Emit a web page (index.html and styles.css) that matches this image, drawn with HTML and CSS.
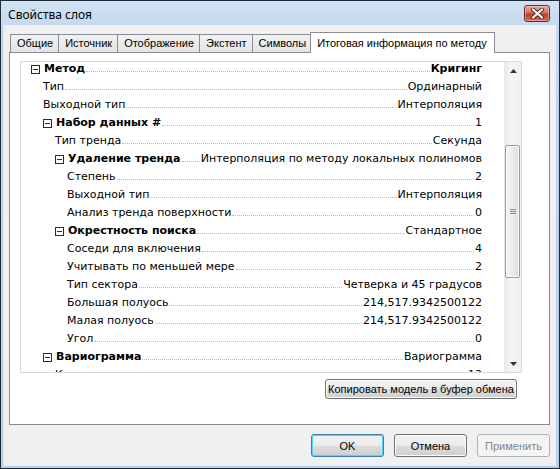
FILE: index.html
```html
<!DOCTYPE html>
<html lang="ru">
<head>
<meta charset="utf-8">
<title>Свойства слоя</title>
<link rel="stylesheet" href="styles.css">
</head>
<body>
<div class="window">
  <div class="titlebar">
    <span class="title">Свойства слоя</span>
    <span class="close">
      <svg width="13" height="11" viewBox="0 0 13 11"><path d="M2 1.5 L11 9.5 M11 1.5 L2 9.5" stroke="#5a2620" stroke-width="4" stroke-linecap="round"/><path d="M2 1.5 L11 9.5 M11 1.5 L2 9.5" stroke="#fff" stroke-width="2.2" stroke-linecap="round"/></svg>
    </span>
  </div>
  <div class="client">
    <div class="tabs">
      <div class="tab">Общие</div>
      <div class="tab">Источник</div>
      <div class="tab">Отображение</div>
      <div class="tab">Экстент</div>
      <div class="tab">Символы</div>
      <div class="tab active">Итоговая информация по методу</div>
    </div>
    <div class="panel">
      <div class="grid">
        <div class="rows">
          <div class="row l0 group strong"><span class="exp"></span><span class="label">Метод</span><span class="lead"></span><span class="val">Кригинг</span></div>
          <div class="row l1"><span class="label">Тип</span><span class="lead"></span><span class="val">Ординарный</span></div>
          <div class="row l1"><span class="label">Выходной тип</span><span class="lead"></span><span class="val">Интерполяция</span></div>
          <div class="row l1 group"><span class="exp"></span><span class="label">Набор данных #</span><span class="lead"></span><span class="val">1</span></div>
          <div class="row l2"><span class="label">Тип тренда</span><span class="lead"></span><span class="val">Секунда</span></div>
          <div class="row l2 group"><span class="exp"></span><span class="label">Удаление тренда</span><span class="lead"></span><span class="val">Интерполяция по методу локальных полиномов</span></div>
          <div class="row l3"><span class="label">Степень</span><span class="lead"></span><span class="val">2</span></div>
          <div class="row l3"><span class="label">Выходной тип</span><span class="lead"></span><span class="val">Интерполяция</span></div>
          <div class="row l3"><span class="label">Анализ тренда поверхности</span><span class="lead"></span><span class="val">0</span></div>
          <div class="row l2 group"><span class="exp"></span><span class="label">Окрестность поиска</span><span class="lead"></span><span class="val">Стандартное</span></div>
          <div class="row l3"><span class="label">Соседи для включения</span><span class="lead"></span><span class="val">4</span></div>
          <div class="row l3"><span class="label">Учитывать по меньшей мере</span><span class="lead"></span><span class="val">2</span></div>
          <div class="row l3"><span class="label">Тип сектора</span><span class="lead"></span><span class="val">Четверка и 45 градусов</span></div>
          <div class="row l3"><span class="label">Большая полуось</span><span class="lead"></span><span class="val">214,517.9342500122</span></div>
          <div class="row l3"><span class="label">Малая полуось</span><span class="lead"></span><span class="val">214,517.9342500122</span></div>
          <div class="row l3"><span class="label">Угол</span><span class="lead"></span><span class="val">0</span></div>
          <div class="row l1 group"><span class="exp"></span><span class="label">Вариограмма</span><span class="lead"></span><span class="val">Вариограмма</span></div>
          <div class="row l2"><span class="label">Количество лагов</span><span class="lead"></span><span class="val">12</span></div>
        </div>
        <div class="vscroll">
          <div class="sbtn"><svg width="7" height="4" viewBox="0 0 7 4"><path d="M0 4 L3.5 0 L7 4 Z" fill="#333"/></svg></div>
          <div class="track"><div class="thumb"><span class="grip"></span></div></div>
          <div class="sbtn"><svg width="7" height="4" viewBox="0 0 7 4"><path d="M0 0 L3.5 4 L7 0 Z" fill="#333"/></svg></div>
        </div>
      </div>
      <div class="copyrow"><button class="btn copy">Копировать модель в буфер обмена</button></div>
    </div>
    <div class="footer">
      <button class="btn default">OK</button>
      <button class="btn">Отмена</button>
      <button class="btn disabled">Применить</button>
    </div>
  </div>
</div>
</body>
</html>
```
FILE: styles.css
```css
* { box-sizing: border-box; }
html, body { margin: 0; padding: 0; }
body { width: 560px; height: 469px; overflow: hidden; background: #fff; font-family: "Liberation Sans", Arial, sans-serif; font-size: 11px; color: #000; }

.window {
  width: 560px; height: 469px;
  border: 1px solid #1d2a38;
  background: linear-gradient(#d3e2f3, #c2d6ed 30px, #b9cfe8);
  padding: 0 3px 2px 2px;
  display: flex; flex-direction: column;
}
.titlebar {
  height: 24px; flex: none;
  display: flex; align-items: center; justify-content: space-between;
  padding: 2px 6px 0 5px;
}
.title { font-family: "Noto Sans", "Open Sans", sans-serif; font-size: 12px; color: #000; }
.close {
  width: 26px; height: 17px; margin-top: -2px;
  border: 1px solid #6b2a23; border-radius: 3px;
  background: linear-gradient(#e9a99c, #d3705f 45%, #c0402e 55%, #d5664f);
  display: flex; align-items: center; justify-content: center;
  box-shadow: inset 0 0 0 1px rgba(255,255,255,0.35);
}
.client {
  flex: 1; background: #f0f0f0;
  border-left: 1px solid #dfe8f2;
  display: flex; flex-direction: column;
  padding-top: 7px;
}
.tabs { display: flex; align-items: flex-end; padding-left: 6px; height: 20px; }
.tab {
  height: 18px; padding: 0 5px 0 6px; line-height: 16px;
  border: 1px solid #898c95; border-bottom: none;
  background: linear-gradient(#f2f2f2, #e3e3e3);
  margin-left: -1px;
}
.tab:first-child { margin-left: 0; }
.tab.active { height: 21px; margin-bottom: -1px; margin-left: -2px; background: #fff; position: relative; z-index: 1; padding: 2px 7px 0 6px; }
.panel {
  margin-left: 5px; width: 541px; height: 373px;
  border: 1px solid #898c95; background: #fff;
  padding: 8px 0 0 10px;
}
.grid {
  width: 502px; height: 312px;
  border: 1px solid #d9d9d9;
  display: flex; overflow: hidden;
}
.rows { flex: 1; overflow: hidden; font-family: "DejaVu Sans", Verdana, sans-serif; font-size: 11px; }
.row {
  height: 18px; display: flex; align-items: baseline;
  line-height: 13px; padding-right: 22px; white-space: nowrap;
}
.l0 { padding-left: 10px; }
.l1 { padding-left: 22px; }
.l2 { padding-left: 34px; }
.l3 { padding-left: 46px; }
.group .label { font-weight: bold; }
.strong .val { font-weight: bold; }
.exp {
  width: 9px; height: 9px; margin: 3px 4px 0 0; flex: none;
  border: 1px solid #2b2b2b; position: relative; align-self: flex-start;
}
.exp::after { content: ""; position: absolute; left: 1px; right: 1px; top: 3px; height: 1px; background: #2b2b2b; }
.lead { flex: 1; height: 0; border-bottom: 1px dotted #b8b8b8; margin: 0 1px; }

.vscroll { width: 17px; flex: none; display: flex; flex-direction: column; background: linear-gradient(90deg, #e9e9e9, #f5f5f5 40%, #f0f0f0); border-left: 1px solid #eaeaea; }
.sbtn { height: 17px; flex: none; display: flex; align-items: center; justify-content: center; }
.track { flex: 1; padding-top: 66px; }
.thumb {
  height: 133px; margin: 0 1px 0 0;
  border: 1px solid #9a9a9a; border-radius: 2px;
  background: linear-gradient(90deg, #f4f4f4, #ececec 50%, #dcdcdc);
  box-shadow: inset 0 0 0 1px #fbfbfb;
  display: flex; align-items: center; justify-content: center;
}
.grip { width: 6px; height: 5px; border-top: 1px solid #8a8a8a; border-bottom: 1px solid #8a8a8a; position: relative; }
.grip::after { content: ""; position: absolute; left: 0; right: 0; top: 1px; height: 1px; background: #8a8a8a; }

.copyrow { display: flex; justify-content: flex-end; padding: 6px 32px 0 0; }
.btn {
  font-family: "Liberation Sans", Arial, sans-serif; font-size: 11px; color: #000;
  height: 20px; padding: 0 4px; border: 1px solid #707070; border-radius: 3px;
  background: linear-gradient(#f2f2f2, #ebebeb 50%, #dddddd 50%, #cfcfcf);
  box-shadow: inset 0 0 0 1px #fcfcfc;
  white-space: nowrap;
}
.copy { width: 192px; padding: 0 2px; }
.footer { display: flex; justify-content: flex-end; gap: 10px; padding: 9px 6px 0 0; }
.footer .btn { width: 73px; height: 23px; }
.btn.default { border-color: #3c7fb1; box-shadow: inset 0 0 0 1px #48d8fb; }
.btn.disabled { border-color: #adb2b5; background: #f4f4f4; color: #838383; box-shadow: none; }
```
